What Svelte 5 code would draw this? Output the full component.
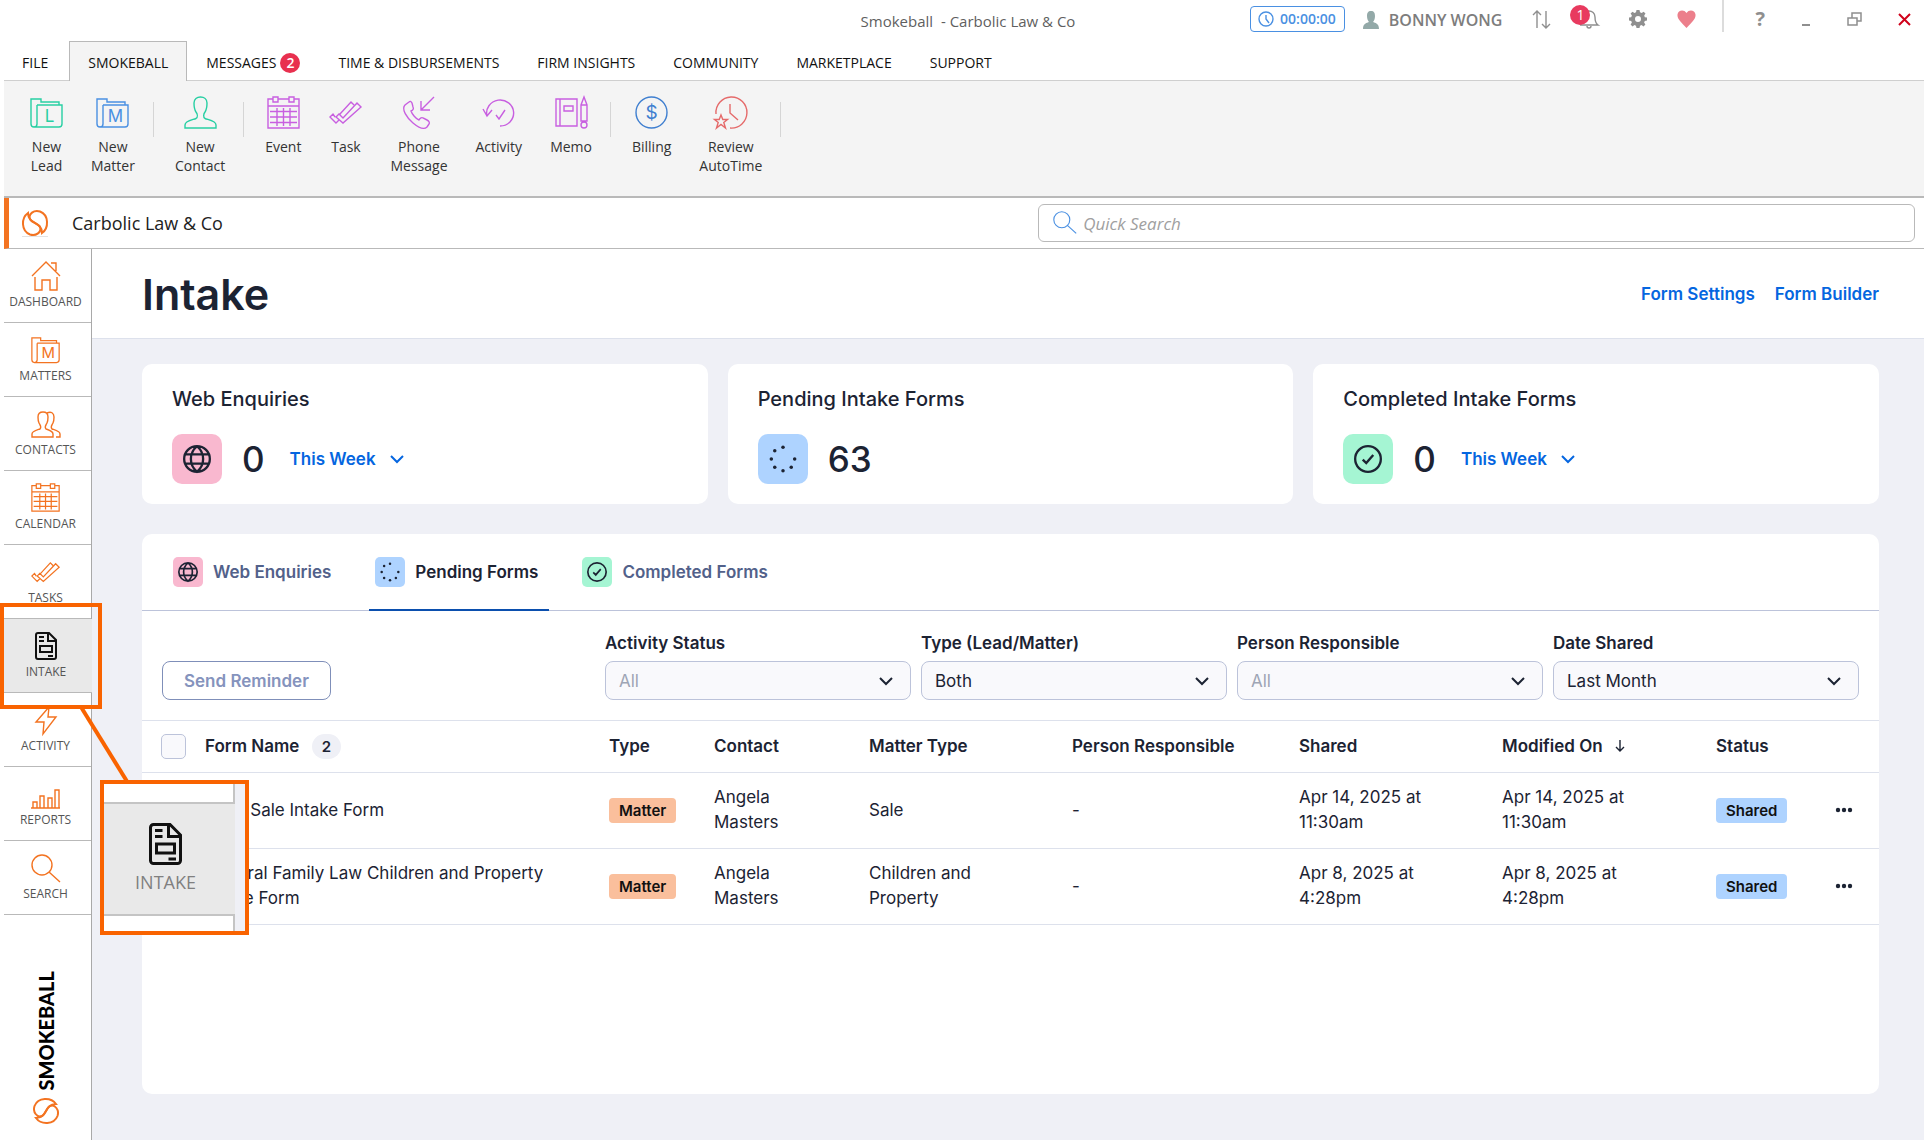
<script>
  const circle = (cx, cy, r) => `M${cx - r} ${cy}a${r} ${r} 0 1 0 ${2 * r} 0a${r} ${r} 0 1 0 ${-2 * r} 0`;

  const folder = 'M1 26V1H11V4H29V7M7 7H32V26a3 3 0 0 1-3 3H4a3 3 0 0 1-3-3M7 7V26a3 3 0 0 1-3 3';
  const tick = 'M7 16L10 13L14 17L28 2L32 6L14 22ZM6 16L4 13L1 16L7 22L10 19M11 13L22 1L25 4';

  const icons = {
    lead: { w: 33, h: 30, d: folder, letter: 'L' },
    matter: { w: 33, h: 30, d: folder, letter: 'M' },
    contact: {
      w: 33, h: 33,
      d: 'M1 32V29C1 25 8 24 12 22.500C14 21 13.500 18 12 16C10 13 10 10 10 7C10 3 13 1 16.500 1C20 1 23 3 23 7C23 10 23 13 21 16C19.500 18 19 21 21 22.500C25 24 32 25 32 29V32Z'
    },
    calendar: {
      w: 33, h: 33,
      d: 'M6 3H1V32H32V3H27M11 3H22M6 1H11V6H6ZM22 1H27V6H22ZM1 10H32M10 12V30M16.500 12V30M23 12V30M3 15.500H30M3 21H30M3 26.500H30'
    },
    task: { w: 33, h: 23, d: tick },
    phone: {
      w: 33, h: 33,
      d: 'M32 1L19 14M19 5V14H28M7 6L3 9C-1 13 5 22 11 27C17 32 22 34 25 31L27 28C28 27 27 25 25 24L21 22C20 21 18 22 17 24C14 23 10 18 9 15C11 14 12 13 11 11L10 7C9 5 8 5 7 6Z'
    },
    activity: { w: 33, h: 28, d: 'M5 17A13.500 13 0 1 1 18 27M1 10L5 17L10 11M14 16L17 20L23 11' },
    memo: {
      w: 33, h: 33,
      d: `M1 3H22V30H1ZM5 3V30M9 10H18V15H9ZM29 1L26 9V25H32V9ZM26 9H32${circle(29, 29, 3)}`
    },
    billing: { w: 33, h: 33, d: circle(16.5, 16.5, 15.5), letter: '$' },
    review: {
      w: 33, h: 33,
      d: 'M2 18A15.500 15.500 0 1 1 16 32M16 8V17L24 24M7 19L8.800 23.500H13.500L9.800 26.500L11.500 32L7 28.500L2.500 32L4.200 26.500L.5 23.500H5.200Z'
    },
    home: { w: 30, h: 30, d: 'M1 15L15 1L29 15M20 2H25V10M4 16V29H11V19H19V29H26V16' },
    people: {
      w: 30, h: 27,
      d: 'M1 26V23C1 20 6 19 9 18C11 16 9 14 8 12C7 10 7 8 7 6C7 3 9 1 12 1C15 1 17 3 17 6C17 8 17 10 16 12C15 14 13 16 15 18C18 19 22 20 22 23V26ZM16 2C20 0 23 2 23 6C23 8 23 10 22 12C21 14 19 16 21 18C24 19 29 20 29 23V26H25'
    },
    bolt: { w: 22, h: 29, d: 'M14 1L1 16H9L8 28L21 11H13Z' },
    bars: { w: 30, h: 30, d: 'M0 29H29M2 29V23H6V29M9 29V17H13V29M17 29V19H21V29M24 29V11H28V29' },
    search: { w: 30, h: 29, d: `${circle(11, 11, 10)}M18 18L29 28` },
    doc: {
      w: 22, h: 28,
      d: 'M3 1H14L21 8V25a2 2 0 0 1-2 2H3a2 2 0 0 1-2-2V3a2 2 0 0 1 2-2ZM13 1V9H21M4 5H9M4 9H9M5 14H17V20H5ZM13 24H18'
    },
    globe: {
      w: 24, h: 24,
      d: `${circle(12, 12, 11)}M12 1C5 7 5 17 12 23C19 17 19 7 12 1M2 8H22M2 16H22`
    },
    check: { w: 24, h: 24, d: `${circle(12, 12, 11)}M7.500 12.500L10.500 15.500L16.500 8.500` },
    chevron: { w: 14, h: 8, d: 'M1 1L7 7L13 1' },
    down: { w: 10, h: 12, d: 'M5 0V11M1 7L5 11L9 7' },
    clock: { w: 16, h: 16, d: `${circle(8, 8, 7)}M8 4V8L11 12` },
    updown: { w: 19, h: 19, d: 'M5 18V1M1 5L5 1L9 5M14 1V18M10 14L14 18L18 14' },
    bell: { w: 20, h: 20, d: 'M1 16H19C16 14 16 11 16 8C16 4 13 2 10 2C7 2 4 4 4 8C4 11 4 14 1 16M8 17a2 2 0 0 0 4 0' },
    restore: { w: 15, h: 14, d: 'M1 6H10V13H1ZM5 6V1H14V9H10' },
    minimise: { w: 10, h: 14, d: 'M1 13H9' },
    close: { w: 13, h: 13, d: 'M1 1L12 12M12 1L1 12' }
  };

  const tabs = ['FILE', 'SMOKEBALL', 'MESSAGES', 'TIME & DISBURSEMENTS', 'FIRM INSIGHTS', 'COMMUNITY', 'MARKETPLACE', 'SUPPORT'];

  const ribbon = [
    [
      { icon: 'lead', tone: 'green', lines: ['New', 'Lead'] },
      { icon: 'matter', tone: 'blue', lines: ['New', 'Matter'] }
    ],
    [{ icon: 'contact', tone: 'green', lines: ['New', 'Contact'] }],
    [
      { icon: 'calendar', tone: 'purple', lines: ['Event'] },
      { icon: 'task', tone: 'purple', lines: ['Task'] },
      { icon: 'phone', tone: 'purple', lines: ['Phone', 'Message'] },
      { icon: 'activity', tone: 'purple', lines: ['Activity'] },
      { icon: 'memo', tone: 'purple', lines: ['Memo'] }
    ],
    [
      { icon: 'billing', tone: 'navy', lines: ['Billing'] },
      { icon: 'review', tone: 'red', lines: ['Review', 'AutoTime'] }
    ]
  ];

  const nav = [
    { icon: 'home', label: 'DASHBOARD' },
    { icon: 'matter', label: 'MATTERS' },
    { icon: 'people', label: 'CONTACTS' },
    { icon: 'calendar', label: 'CALENDAR' },
    { icon: 'task', label: 'TASKS' },
    { icon: 'doc', label: 'INTAKE', current: true },
    { icon: 'bolt', label: 'ACTIVITY' },
    { icon: 'bars', label: 'REPORTS' },
    { icon: 'search', label: 'SEARCH' }
  ];

  const stats = [
    { title: 'Web Enquiries', kind: 'globe', value: 0, period: true },
    { title: 'Pending Intake Forms', kind: 'dots', value: 63, period: false },
    { title: 'Completed Intake Forms', kind: 'check', value: 0, period: true }
  ];

  const views = [
    { label: 'Web Enquiries', kind: 'globe' },
    { label: 'Pending Forms', kind: 'dots' },
    { label: 'Completed Forms', kind: 'check' }
  ];
  let view = $state('Pending Forms');

  const filters = [
    { id: 'status', label: 'Activity Status', value: 'All', empty: true },
    { id: 'type', label: 'Type (Lead/Matter)', value: 'Both' },
    { id: 'person', label: 'Person Responsible', value: 'All', empty: true },
    { id: 'date', label: 'Date Shared', value: 'Last Month' }
  ];

  const rows = [
    { name: 'NSW Sale Intake Form', matter: 'Sale', date: 'Apr 14, 2025 at', time: '11:30am' },
    { name: 'General Family Law Children and Property Intake Form', matter: 'Children and Property', date: 'Apr 8, 2025 at', time: '4:28pm' }
  ];
</script>

{#snippet icon(name, scale = 1)}
  {@const i = icons[name]}
  <svg class="icon" width={i.w * scale} height={i.h * scale} viewBox="0 0 {i.w} {i.h}" aria-hidden="true">
    <path d={i.d} />
    {#if i.letter === '$'}
      <text x="16.500" y="23" font-size="19">$</text>
    {:else if i.letter}
      <text x="19.500" y="24" font-size="17">{i.letter}</text>
    {/if}
  </svg>
{/snippet}

{#snippet kindIcon(kind, size)}
  <svg class="icon" width={size} height={size} viewBox="0 0 24 24" aria-hidden="true">
    {#if kind === 'dots'}
      {#each [0, 1, 2, 3, 4, 5, 6] as n}
        <circle class="dot" cx={12 + 10 * Math.cos((n * Math.PI) / 4)} cy={12 + 10 * Math.sin((n * Math.PI) / 4)} r="1.5" />
      {/each}
    {:else}
      <path d={icons[kind].d} />
    {/if}
  </svg>
{/snippet}

{#snippet brand(size)}
  <svg class="icon brand" width={size} height={size} viewBox="0 0 26 26" aria-hidden="true">
    <path d="M6 3C-1 8-1 21 8 24.500C14 26.500 20 22 18 17C16 12.500 6 13 6 3Z" />
    <path d="M20 23C27 18 27 5 18 1.500C12-.5 6 4 8 9C10 13.500 20 13 20 23Z" />
  </svg>
{/snippet}

<div class="app">
  <header class="titlebar">
    <span></span>
    <div class="title">Smokeball&nbsp; - Carbolic Law &amp; Co</div>
    <div class="tools">
      <button class="timer">{@render icon('clock')}00:00:00</button>
      <button class="user">
        <svg width="16" height="18" viewBox="0 0 16 18" aria-hidden="true">
          <path d="M8 0C11 0 12 2 12 5C12 8 11 10 10 11C12 12 16 12 16 18H0C0 12 4 12 6 11C5 10 4 8 4 5C4 2 5 0 8 0Z" />
        </svg>BONNY WONG
      </button>
      <button class="tool sync" aria-label="Sync">{@render icon('updown')}</button>
      <button class="tool alerts" aria-label="Notifications">{@render icon('bell')}<span class="count">1</span></button>
      <button class="tool gear" aria-label="Settings">
        <svg width="20" height="20" viewBox="0 0 20 20" aria-hidden="true">
          <path fill-rule="evenodd" d="M8.500 1H11.500L12 3.300L13.700 4L15.600 2.700L17.500 4.600L16.200 6.500L16.800 8.200L19 8.600V11.400L16.800 11.900L16.100 13.600L17.400 15.500L15.500 17.400L13.600 16.100L12 16.800L11.500 19H8.500L8 16.800L6.400 16.100L4.500 17.400L2.600 15.500L3.900 13.600L3.200 11.900L1 11.400V8.600L3.200 8.200L3.900 6.400L2.600 4.600L4.500 2.700L6.400 4L8 3.300ZM10 7a3 3 0 1 0 0 6a3 3 0 1 0 0-6Z" />
        </svg>
      </button>
      <button class="tool heart" aria-label="Favourites">
        <svg width="19" height="18" viewBox="0 0 19 18" aria-hidden="true">
          <path d="M9.500 18C4 12 0 9 .5 4.500C1 0 7-1 9.500 3C12-1 18 0 18.500 4.500C19 9 15 12 9.500 18Z" />
        </svg>
      </button>
      <div class="window">
        <button class="help">?</button>
        <button aria-label="Minimise">{@render icon('minimise')}</button>
        <button class="restore" aria-label="Restore">{@render icon('restore')}</button>
        <button class="close" aria-label="Close">{@render icon('close')}</button>
      </div>
    </div>
  </header>

  <nav class="tabs" aria-label="Ribbon tabs">
    {#each tabs as tab}
      <button class:active={tab === 'SMOKEBALL'}>
        {tab}{#if tab === 'MESSAGES'}<span class="unread">2</span>{/if}
      </button>
    {/each}
  </nav>

  <div class="ribbon">
    {#each ribbon as group}
      <div class="group">
        {#each group as item}
          <button>
            <span class="glyph {item.tone}">{@render icon(item.icon)}</span>
            {#each item.lines as line}<span>{line}</span>{/each}
          </button>
        {/each}
      </div>
    {/each}
  </div>

  <div class="orgbar">
    <span class="mark">{@render brand(26)}</span>
    <span class="org">Carbolic Law &amp; Co</span>
    <label class="quick">
      {@render icon('search', 0.8)}
      <input type="search" placeholder="Quick Search" aria-label="Quick Search" />
    </label>
  </div>

  <div class="body">
    <aside class="side">
      <nav aria-label="Main">
        {#each nav as item}
          <a href="#{item.label.toLowerCase()}" class:current={item.current}>
            <span class="glyph">{@render icon(item.icon, item.icon === 'matter' || item.icon === 'calendar' || item.icon === 'task' ? 0.88 : 1)}</span>
            {item.label}
            {#if item.current}
              <span class="spot"></span>
              <svg class="lead-line" width="60" height="80" viewBox="0 0 60 80" aria-hidden="true"><path d="M9 2L56 78" /></svg>
              <span class="callout">
                <span class="above"></span>
                <span class="zoomed">{@render icon('doc', 1.5)}INTAKE</span>
                <span class="below"></span>
              </span>
            {/if}
          </a>
        {/each}
      </nav>
      <div class="wordmark">
        <span>SMOKEBALL</span>
        {@render brand(26)}
      </div>
    </aside>

    <main>
      <div class="pagehead">
        <h1>Intake</h1>
        <a href="#settings">Form Settings</a>
        <a href="#builder">Form Builder</a>
      </div>

      <div class="content">
        <div class="stats">
          {#each stats as s}
            <section class="card">
              <h2>{s.title}</h2>
              <div class="stat">
                <span class="tile {s.kind}">{@render kindIcon(s.kind, 28)}</span>
                <span class="value">{s.value}</span>
                {#if s.period}
                  <button class="period">This Week {@render icon('chevron')}</button>
                {/if}
              </div>
            </section>
          {/each}
        </div>

        <section class="panel">
          <div class="views" role="tablist">
            {#each views as v}
              <button role="tab" aria-selected={view === v.label} class:on={view === v.label} onclick={() => (view = v.label)}>
                <span class="tile small {v.kind}">{@render kindIcon(v.kind, 20)}</span>
                {v.label}
              </button>
            {/each}
          </div>

          <div class="filters">
            <div class="action"><button class="remind">Send Reminder</button></div>
            {#each filters as f}
              <div class="field">
                <label for={f.id}>{f.label}</label>
                <div class="pick">
                  <select id={f.id} class:empty={f.empty}><option>{f.value}</option></select>
                  {@render icon('chevron')}
                </div>
              </div>
            {/each}
          </div>

          <table>
            <colgroup>
              <col class="c-check" /><col /><col class="c-type" /><col class="c-contact" /><col class="c-matter" />
              <col class="c-person" /><col class="c-date" /><col class="c-modified" /><col class="c-status" /><col class="c-more" />
            </colgroup>
            <thead>
              <tr>
                <th class="tickcell"><input type="checkbox" aria-label="Select all forms" /></th>
                <th>Form Name <span class="total">2</span></th>
                <th>Type</th>
                <th>Contact</th>
                <th>Matter Type</th>
                <th>Person Responsible</th>
                <th>Shared</th>
                <th>Modified On <span class="sort">{@render icon('down')}</span></th>
                <th>Status</th>
                <th></th>
              </tr>
            </thead>
            <tbody>
              {#each rows as r}
                <tr>
                  <td class="tickcell"><input type="checkbox" aria-label="Select {r.name}" /></td>
                  <td>{r.name}</td>
                  <td><span class="tag matter">Matter</span></td>
                  <td>Angela<br />Masters</td>
                  <td>{r.matter}</td>
                  <td>-</td>
                  <td>{r.date}<br />{r.time}</td>
                  <td>{r.date}<br />{r.time}</td>
                  <td><span class="tag shared">Shared</span></td>
                  <td>
                    <button class="more" aria-label="More actions">
                      <svg width="18" height="6" viewBox="0 0 18 6" aria-hidden="true">
                        <circle cx="3" cy="3" r="2.200" /><circle cx="9" cy="3" r="2.200" /><circle cx="15" cy="3" r="2.200" />
                      </svg>
                    </button>
                  </td>
                </tr>
              {/each}
            </tbody>
          </table>
        </section>
      </div>
    </main>
  </div>
</div>

<style>
  :global(body) { margin: 0; background: #fff; }
  * { box-sizing: border-box; }
  button { font: inherit; color: inherit; background: none; border: 0; padding: 0; margin: 0; cursor: pointer; }
  a { text-decoration: none; color: inherit; }
  svg { display: block; flex: none; }

  .app {
    display: flex;
    flex-direction: column;
    min-height: 100vh;
    padding-left: 4px;
    font-family: "Open Sans", "Noto Sans", sans-serif;
    font-size: 14px;
    color: #333;
  }
  .icon { fill: none; stroke: currentColor; stroke-width: 1.4; overflow: visible; }
  .icon text { fill: currentColor; stroke: none; text-anchor: middle; font-family: Inter, sans-serif; font-weight: 400; }

  /* Title bar */
  .titlebar { display: grid; grid-template-columns: 1fr auto 1fr; align-items: center; height: 41px; padding-left: 8px; }
  .title { font-size: 15px; color: #5f5f5f; }
  .tools { display: flex; align-items: center; justify-content: flex-end; height: 32px; align-self: start; color: #8f8f8f; }
  .timer {
    display: flex; align-items: center; gap: 6px; height: 26px; padding: 0 8px 0 7px; margin: 5px 18px 0 0;
    border: 1px solid #4a90e2; border-radius: 4px; color: #4a90e2; font-size: 14px; font-weight: 600;
  }
  .user { display: flex; align-items: center; gap: 10px; margin: 8px 30px 0 0; font-size: 16px; font-weight: 600; color: #7d7d7d; }
  .user svg { fill: #93a9a8; }
  .tool { position: relative; margin: 6px 0 0; }
  .sync { margin-right: 28px; }
  .alerts { margin-right: 29px; }
  .gear { margin-right: 29px; }
  .heart { margin-right: 26px; }
  .gear svg { fill: #8f8f8f; }
  .heart svg { fill: #ec7f8b; }
  .count {
    position: absolute; left: -9px; top: -4px; width: 20px; height: 20px; border-radius: 50%;
    background: #e83a5f; color: #fff; font-size: 14px; line-height: 20px; text-align: center;
  }
  .window { display: flex; align-items: center; height: 32px; padding: 6px 13px 0 31px; gap: 36px; border-left: 2px solid #dcdcdc; }
  .help { font-size: 20px; font-weight: 700; line-height: 24px; }
  .close { color: #d0021b; }
  .window .icon { stroke-width: 2; }
  .window .restore .icon { stroke-width: 1.5; }

  /* Ribbon */
  .tabs { display: flex; height: 40px; border-bottom: 1px solid #cfcfcf; color: #111; font-size: 14px; }
  .tabs button { display: flex; align-items: center; height: 40px; padding: 2px 18px 0; border: 1px solid transparent; border-bottom: 0; }
  .tabs button:first-child { padding-right: 20px; padding-left: 17px; }
  .tabs .active { background: #f4f4f4; border-color: #b9b9b9; }
  .unread {
    width: 20px; height: 20px; margin-left: 4px; border-radius: 50%; background: #e8304f;
    color: #fff; font-size: 14px; font-weight: 600; line-height: 20px; text-align: center;
  }
  .ribbon { display: flex; height: 117px; padding: 15px 0 0 12px; background: #f4f4f4; border-bottom: 2px solid #b9b9b9; }
  .group { display: flex; align-items: flex-start; margin-right: 7px; }
  .group::after { content: ""; width: 1px; height: 35px; margin: 6px 0 0 4px; background: #d5d5d5; }
  .group button { display: flex; flex-direction: column; align-items: center; padding: 0 14px; line-height: 19px; }
  .ribbon .glyph { display: flex; align-items: center; justify-content: center; height: 33px; margin-bottom: 8px; }
  .green { color: #27cfa3; }
  .blue { color: #4a90e2; }
  .purple { color: #c85fe0; }
  .navy { color: #3f7fd0; }
  .red { color: #e56a6a; }

  .orgbar { display: flex; align-items: center; height: 51px; padding-right: 9px; border-left: 5px solid #f37321; border-bottom: 1px solid #b9b9b9; }
  .mark { margin: 0 24px 0 13px; border-bottom: 1px solid #e3e3e3; color: #f37321; }
  .org { flex: 1; font-size: 18px; font-weight: 500; color: #222; }
  .quick { display: flex; align-items: center; gap: 6px; width: 46%; height: 38px; padding: 0 14px; border: 1px solid #b9b9b9; border-radius: 6px; color: #4a90e2; }
  .quick input { flex: 1; border: 0; outline: 0; padding: 0; background: none; font: italic 17px "Open Sans", sans-serif; color: #333; }
  .quick input::placeholder { color: #a0a0a0; }

  /* Side navigation */
  .body { display: flex; flex: 1; }
  .side { display: flex; flex-direction: column; justify-content: space-between; width: 88px; border-right: 1px solid #a9a9a9; }
  .side a {
    position: relative; display: flex; flex-direction: column; align-items: center; height: 74px; padding: 12px 4px 0 0;
    border-bottom: 1px solid #b9b9b9; font-size: 12px; line-height: 18px; color: #555;
  }
  .side .glyph { display: flex; align-items: center; height: 30px; margin-bottom: 2px; color: #f37321; }
  .side .current { margin-right: -1px; background: #e9e9e9; }
  .side .current .glyph { color: #111; }
  .current .icon { stroke-width: 2; }
  .wordmark { display: flex; flex-direction: column; align-items: center; gap: 7px; padding: 0 4px 16px 0; color: #f37321; }
  .wordmark span { writing-mode: vertical-rl; transform: rotate(180deg); font: 900 20px/24px Lato, sans-serif; color: #000; }
  .wordmark .brand { transform: rotate(-90deg); }
  .brand { stroke-width: 2; }

  .spot { position: absolute; left: -4px; top: -16px; width: 102px; height: 106px; border: 4px solid #f96300; z-index: 2; }
  .lead-line { position: absolute; left: 68px; top: 86px; stroke: #f96300; stroke-width: 4; z-index: 2; }
  .callout {
    position: absolute; left: 96px; top: 161px; z-index: 3; width: 149px; height: 155px; padding-right: 10px;
    display: flex; flex-direction: column; border: 4px solid #f96300; background: #eff0f6;
  }
  .above, .below { background: #fff; border-right: 2px solid #c4c4c4; }
  .above { height: 18px; }
  .below { flex: 1; }
  .zoomed {
    display: flex; flex-direction: column; align-items: center; gap: 5px; height: 114px; padding: 19px 8px 0 0;
    border: solid #c4c4c4; border-width: 2px 0; background: #e9e9e9; font-size: 18px; line-height: 24px; color: #808080;
  }
  .zoomed .icon { stroke: #111; }

  /* Page */
  main { flex: 1; display: flex; flex-direction: column; background: #eff0f6; font-family: Inter, sans-serif; font-size: 17px; color: #1c2333; }
  .pagehead { display: flex; align-items: center; gap: 20px; height: 90px; padding: 0 45px 0 50px; background: #fff; border-bottom: 1px solid #dde1ec; }
  h1 { flex: 1; margin: 0; font-size: 43px; font-weight: 600; line-height: 50px; }
  .pagehead a, .period { color: #0566e0; font-weight: 600; }
  .content { flex: 1; display: flex; flex-direction: column; gap: 30px; padding: 25px 45px 46px 50px; }
  .stats { display: grid; grid-template-columns: repeat(3, 1fr); gap: 20px; }
  .card { height: 140px; padding: 23px 30px 20px; border-radius: 10px; background: #fff; }
  h2 { margin: 0 0 23px; font-size: 20px; font-weight: 500; line-height: 24px; }
  .stat { display: flex; align-items: center; gap: 20px; }
  .tile { display: flex; align-items: center; justify-content: center; width: 50px; height: 50px; border-radius: 10px; color: #1c2333; }
  .tile .icon { stroke-width: 2; }
  .tile .dot { fill: currentColor; stroke: none; }
  .tile.small { width: 30px; height: 30px; border-radius: 5px; }
  .tile.globe { background: #f9b8cf; }
  .tile.dots { background: #aed3ff; }
  .tile.check { background: #a5f5d3; }
  .value { font-size: 35px; font-weight: 500; line-height: 40px; }
  .period { display: flex; align-items: center; gap: 14px; margin-left: 5px; }
  .period .icon, .pick .icon { stroke-width: 2; }

  .panel { flex: 1; border-radius: 10px; background: #fff; }
  .views { display: flex; gap: 27px; height: 77px; padding-left: 25px; border-bottom: 1px solid #bcc3da; }
  .views button { display: flex; align-items: center; gap: 10px; height: 77px; padding: 0 11px 0 6px; border-bottom: 2px solid transparent; font-weight: 600; color: #52618a; }
  .views .on { border-color: #0b4fae; color: #1c2333; }

  .filters { display: grid; grid-template-columns: 1fr repeat(4, 306px); gap: 10px; padding: 20px; border-bottom: 1px solid #dde1ec; align-items: end; }
  .remind { height: 39px; padding: 0 21px; border: 1px solid #7f8fb9; border-radius: 8px; color: #8593bd; font-weight: 600; }
  .action { display: flex; }
  .field { display: flex; flex-direction: column; gap: 6px; }
  .field label { font-weight: 600; line-height: 24px; }
  .pick { position: relative; }
  select {
    display: block; width: 100%; height: 39px; padding: 0 40px 0 13px; appearance: none; border: 1px solid #bcc3da;
    border-radius: 8px; background: #f9f9fc; font: 17px Inter, sans-serif; color: #1c2333;
  }
  select.empty { color: #9ea5b5; }
  .pick .icon { position: absolute; right: 18px; top: 16px; pointer-events: none; }

  table { width: 100%; border-collapse: collapse; table-layout: fixed; line-height: 25px; }
  tr { border-bottom: 1px solid #dde1ec; }
  th, td { padding: 0 30px 0 0; text-align: left; }
  th { height: 51px; font-weight: 600; white-space: nowrap; }
  td { height: 76px; }
  th:last-child, td:last-child { padding: 0; }
  .tickcell { padding: 0 0 0 19px; }
  .tickcell input { display: block; appearance: none; width: 25px; height: 25px; margin: 0; border: 1px solid #bcc3da; border-radius: 5px; background: #f9f9fc; }
  .c-check { width: 63px; }
  .c-type { width: 105px; }
  .c-contact { width: 155px; }
  .c-matter { width: 203px; }
  .c-person { width: 227px; }
  .c-date { width: 203px; }
  .c-modified { width: 214px; }
  .c-status { width: 119px; }
  .c-more { width: 44px; }
  .total { display: inline-block; margin-left: 8px; padding: 0 10px; border-radius: 13px; background: #eff0f6; font-size: 15px; }
  .sort { display: inline-block; margin-left: 8px; }
  .tag { display: inline-block; padding: 0 10px; border-radius: 4px; font-size: 15px; font-weight: 600; color: #111; vertical-align: middle; }
  .tag.matter { background: #fabf9c; }
  .tag.shared { background: #aed3ff; }
  .more { display: flex; align-items: center; height: 25px; fill: #1c2333; }
</style>
